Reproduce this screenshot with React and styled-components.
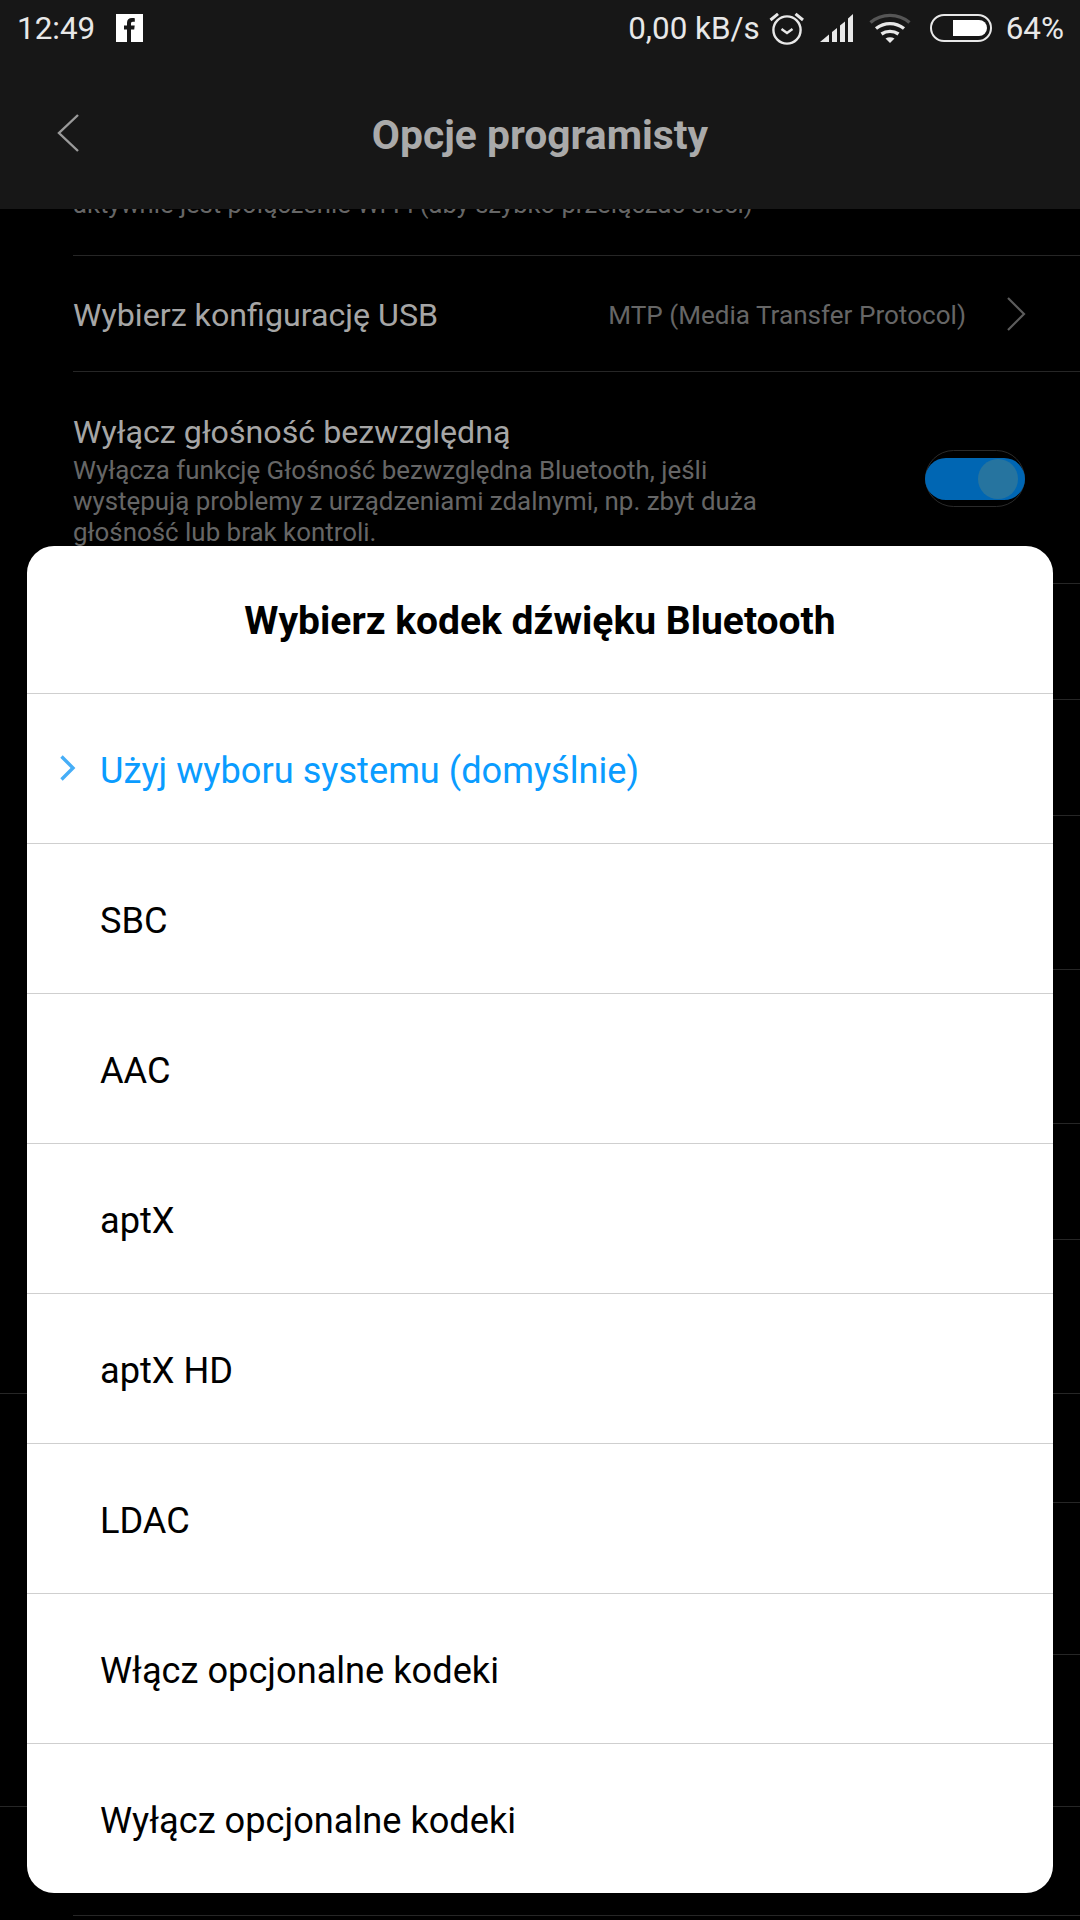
import React from 'react'
import styled, { createGlobalStyle } from 'styled-components'

const OPTIONS = [
  'SBC',
  'AAC',
  'aptX',
  'aptX HD',
  'LDAC',
  'Włącz opcjonalne kodeki',
  'Wyłącz opcjonalne kodeki'
]

// rows hidden under the dialog, only their dividers show at the edges
const HIDDEN_ROWS = [
  { height: 116 },
  { height: 116 },
  { height: 154 },
  { height: 154 },
  { height: 116 },
  { height: 154, full: true },
  { height: 109 },
  { height: 152 },
  { height: 152, full: true },
  { height: 109 }
]

const GlobalStyle = createGlobalStyle`
  html, body {
    margin: 0;
    padding: 0;
    background: #000;
  }
  * {
    box-sizing: border-box;
  }
`

const App = () => (
  <Screen>
    <GlobalStyle />
    <TopBar>
      <StatusBar>
        <StatusGroup>
          <Clock>12:49</Clock>
          <FacebookIcon viewBox='0 0 27 28'>
            <rect width='27' height='28' fill='#fff' />
            <path
              d='M11 28V15.500H8v-4h3V9c0-3.400 1.800-5 4.900-5 1.200 0 2.300.1 2.900.2v3.500h-1.900c-1.500 0-1.900.8-1.900 1.900v1.900h3.700l-.5 4h-3.200V28z'
              fill='#171717'
            />
          </FacebookIcon>
        </StatusGroup>
        <StatusGroup>
          <NetSpeed>0,00 kB/s</NetSpeed>
          <AlarmIcon viewBox='0 0 35 33' fill='none' stroke='#e8e8e8' strokeWidth='2.400'>
            <circle cx='18' cy='18' r='13.600' />
            <path d='M12.500 17l5.500 4 5.500-4' strokeWidth='2.400' />
            <path d='M1.500 8L9 1.800M34 8L26.500 1.800' strokeWidth='3' />
          </AlarmIcon>
          <SignalIcon viewBox='0 0 33 28'>
            <path d='M0 28l9-7.500V28z' fill='#e8e8e8' />
            <path d='M12 18l5-4v14h-5z' fill='#e8e8e8' />
            <path d='M20 11.500l5-4V28h-5z' fill='#e8e8e8' />
            <path d='M28 4.500L33 0v28h-5z' fill='#e8e8e8' />
          </SignalIcon>
          <WifiIcon viewBox='0 0 42 30' fill='none' strokeWidth='3.400'>
            <path d='M1.500 9.500C12.500 0 29.500 0 40.500 9.500' stroke='#555' />
            <path d='M7 15.500c8.500-6.500 19.500-6.500 28 0' stroke='#e8e8e8' />
            <path d='M12.500 21c5-3.500 12-3.500 17 0' stroke='#e8e8e8' />
            <path d='M21 30l-4.500-4.500c2.800-1.700 6.200-1.700 9 0z' fill='#e8e8e8' stroke='none' />
          </WifiIcon>
          <BatteryIcon viewBox='0 0 62 28'>
            <rect x='1' y='1' width='60' height='26' rx='13' fill='none' stroke='#e8e8e8' strokeWidth='2' />
            <path d='M23 6h26a8 8 0 0 1 0 16H23z' fill='#fff' />
          </BatteryIcon>
          <BatteryLevel>64%</BatteryLevel>
        </StatusGroup>
      </StatusBar>
      <TitleBar>
        <BackIcon viewBox='0 0 22 40' fill='none' stroke='#9a9a9a' strokeWidth='2.400'>
          <path d='M21 2L2 20l19 18' />
        </BackIcon>
        <Title>Opcje programisty</Title>
      </TitleBar>
    </TopBar>

    <SettingsList>
      <ClippedRow>
        <ClippedSummary>aktywnie jest połączenie Wi-Fi (aby szybko przełączać sieci)</ClippedSummary>
      </ClippedRow>
      <LinkRow>
        <RowLabel>Wybierz konfigurację USB</RowLabel>
        <RowValue>MTP (Media Transfer Protocol)</RowValue>
        <ChevronIcon viewBox='0 0 20 36' fill='none' stroke='#5c5c5c' strokeWidth='2.200'>
          <path d='M2 2l16 16L2 34' />
        </ChevronIcon>
      </LinkRow>
      <ToggleRow>
        <ToggleText>
          <RowLabel>Wyłącz głośność bezwzględną</RowLabel>
          <ToggleSummary>
            Wyłącza funkcję Głośność bezwzględna Bluetooth, jeśli
            <br />
            występują problemy z urządzeniami zdalnymi, np. zbyt duża
            <br />
            głośność lub brak kontroli.
          </ToggleSummary>
        </ToggleText>
        <Toggle>
          <ToggleTrack>
            <ToggleKnob />
          </ToggleTrack>
        </Toggle>
      </ToggleRow>
      {HIDDEN_ROWS.map((row, i) => (
        <HiddenRow key={i} height={row.height} $full={row.full} />
      ))}
    </SettingsList>

    <Dialog>
      <DialogTitle>Wybierz kodek dźwięku Bluetooth</DialogTitle>
      <OptionRow $selected>
        <SelectedMark viewBox='0 0 17 28' fill='none' stroke='#46aef7' strokeWidth='3.400'>
          <path d='M2.500 2.500l11.500 11.500L2.500 25.500' />
        </SelectedMark>
        Użyj wyboru systemu (domyślnie)
      </OptionRow>
      {OPTIONS.map(option => (
        <OptionRow key={option}>{option}</OptionRow>
      ))}
    </Dialog>
  </Screen>
)

const Screen = styled.div`
  position: relative;
  width: 1080px;
  height: 1920px;
  overflow: hidden;
  background: #000;
  font-family: Roboto, 'Liberation Sans', sans-serif;
`

const TopBar = styled.header`
  height: 209px;
  background: #171717;
`

const StatusBar = styled.div`
  display: flex;
  justify-content: space-between;
  align-items: center;
  height: 56px;
  padding: 0 16px 0 17px;
  color: #e8e8e8;
  font-size: 31.400px;
`

const StatusGroup = styled.div`
  display: flex;
  align-items: center;
`

const Clock = styled.span`
  width: 77px;
`

const FacebookIcon = styled.svg`
  width: 27px;
  height: 28px;
  margin: -1px 0 0 22px;
`

const NetSpeed = styled.span`
  margin-right: 9px;
`

const AlarmIcon = styled.svg`
  width: 35px;
  height: 33px;
  margin-bottom: -1px;
`

const SignalIcon = styled.svg`
  width: 33px;
  height: 28px;
  margin: -1px 0 0 16px;
`

const WifiIcon = styled.svg`
  width: 42px;
  height: 30px;
  margin: 0 0 0 16px;
`

const BatteryIcon = styled.svg`
  width: 62px;
  height: 28px;
  margin: -1px 0 0 19px;
`

const BatteryLevel = styled.span`
  margin-left: 14px;
`

const TitleBar = styled.div`
  position: relative;
  display: flex;
  justify-content: center;
  align-items: center;
  height: 153px;
`

const BackIcon = styled.svg`
  position: absolute;
  left: 57px;
  top: 57px;
  width: 22px;
  height: 40px;
`

const Title = styled.h1`
  margin: 4px 0 0;
  color: #aaa;
  font-size: 40.800px;
  font-weight: 700;
`

const SettingsList = styled.div`
  display: flex;
  flex-direction: column;
`

const Divided = styled.div`
  margin-left: 73px;
  border-bottom: 1px solid #262626;
`

const ClippedRow = styled(Divided)`
  display: flex;
  align-items: flex-end;
  height: 47px;
  padding-bottom: 35px;
  overflow: hidden;
`

const LinkRow = styled(Divided)`
  display: flex;
  align-items: center;
  height: 116px;
  padding-right: 54px;
`

const RowLabel = styled.div`
  margin-top: 3px;
  color: #a6a6a6;
  font-size: 32.200px;
  line-height: 38px;
`

const RowSummary = styled.div`
  flex: none;
  color: #666;
  font-size: 25.900px;
  line-height: 31px;
  white-space: nowrap;
`

const ClippedSummary = styled(RowSummary)`
  font-size: 25.600px;
`

const ToggleSummary = styled(RowSummary)`
  margin-top: 4px;
`

const RowValue = styled.div`
  margin: 2px 0 0 auto;
  color: #666;
  font-size: 26.100px;
`

const ChevronIcon = styled.svg`
  width: 20px;
  height: 36px;
  margin-left: 40px;
`

const ToggleRow = styled(Divided)`
  display: flex;
  justify-content: space-between;
  height: 212px;
  padding: 38px 55px 0 0;
`

const ToggleText = styled.div`
  display: flex;
  flex-direction: column;
`

const Toggle = styled.div`
  display: flex;
  align-items: center;
  width: 100px;
  height: 57px;
  margin-top: 40px;
  border: 1px solid #2a2a2a;
  border-radius: 29px;
`

const ToggleTrack = styled.div`
  display: flex;
  justify-content: flex-end;
  align-items: center;
  flex: 1;
  height: 42px;
  margin: 0 -1px;
  padding-right: 7px;
  border-radius: 21px;
  background: #0066b3;
`

const ToggleKnob = styled.div`
  width: 40px;
  height: 40px;
  border-radius: 50%;
  background: #26749f;
`

const HiddenRow = styled(Divided)`
  flex: none;
  height: ${props => props.height}px;
  margin-left: ${props => (props.$full ? 0 : 73)}px;
`

const Dialog = styled.section`
  position: absolute;
  left: 27px;
  top: 546px;
  width: 1026px;
  height: 1347px;
  border-radius: 27px;
  background: #fff;
  overflow: hidden;
`

const DialogTitle = styled.h2`
  display: flex;
  justify-content: center;
  align-items: center;
  height: 147px;
  margin: 0;
  padding-top: 2px;
  color: #000;
  font-size: 39px;
  font-weight: 700;
`

const OptionRow = styled.div`
  position: relative;
  display: flex;
  align-items: center;
  height: 150px;
  padding: 4px 0 0 73px;
  border-top: 1px solid #cfcfcf;
  color: ${props => (props.$selected ? '#0a9cff' : '#000')};
  font-size: 36.200px;
`

const SelectedMark = styled.svg`
  position: absolute;
  left: 32px;
  top: 60px;
  width: 17px;
  height: 28px;
`

export default App
